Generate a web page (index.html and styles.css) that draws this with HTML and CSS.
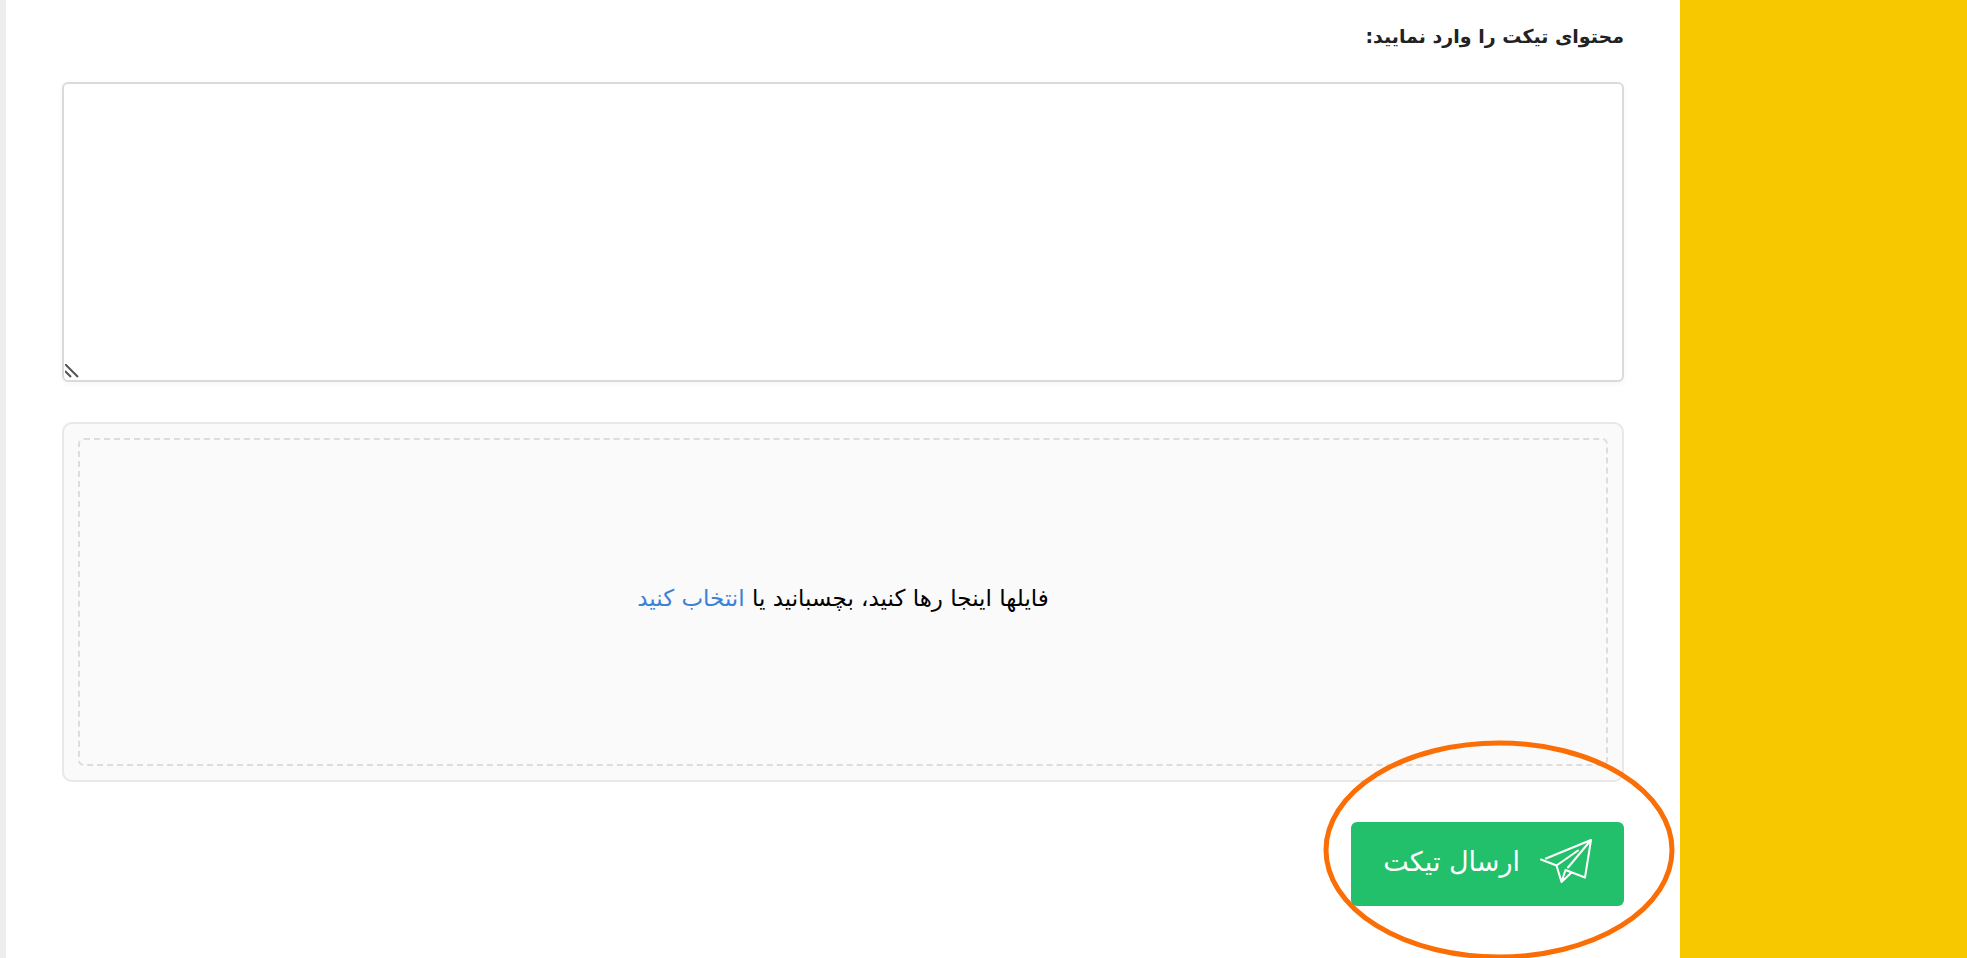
FILE: index.html
```
<!DOCTYPE html>
<html lang="fa" dir="rtl">

<head>
    <meta charset="UTF-8">
    <meta name="viewport" content="width=device-width, initial-scale=1.0">
    <title>ارسال تیکت</title>
    <link rel="stylesheet" href="styles.css">
</head>

<body>
    <aside class="sidebar"></aside>
    <main class="content">
        <form class="ticket-form">
            <label class="ticket-label" for="ticket-text">محتوای تیکت را وارد نمایید:</label>
            <div class="text-wrap">
                <textarea class="ticket-text" id="ticket-text"></textarea>
                <svg class="grip" viewBox="0 0 14 14" aria-hidden="true">
                    <path d="M0 0l13 13M0 7l6 6" />
                </svg>
            </div>
            <div class="dropzone">
                <div class="dropzone-inner">
                    <p class="dropzone-text">فایلها اینجا رها کنید، بچسبانید یا <a href="#">انتخاب کنید</a></p>
                </div>
            </div>
            <div class="submit-wrap">
                <button class="submit-btn" type="submit">
                    <svg class="plane" viewBox="0 0 52 46" aria-hidden="true">
                        <path d="M6 20.5L51 2L45 39.5L25.5 32L21.5 44L16.5 27.5L1 21.5M16.5 27.5L38 12.5M51 2L28 29.5M21.5 44L31 35" />
                    </svg>
                    <span>ارسال تیکت</span>
                </button>
                <svg class="highlight" viewBox="0 0 352 220" aria-hidden="true">
                    <ellipse cx="176" cy="110" rx="173" ry="107" />
                </svg>
            </div>
        </form>
    </main>
</body>

</html>
```

FILE: styles.css
```
* {
    box-sizing: border-box;
}

body {
    display: flex;
    min-height: 100vh;
    margin: 0;
    background-color: #fff;
    font-family: "DejaVu Sans", sans-serif;
    overflow: hidden;
}

.sidebar {
    flex: 0 0 287px;
    background-color: #f7c700;
}

.content {
    flex: 1;
    padding: 16px 56px 0;
    border-left: 6px solid #ededed;
}

.ticket-form {
    display: flex;
    flex-direction: column;
}

.ticket-label {
    margin-bottom: 26px;
    color: #222;
    font-size: 19px;
    font-weight: bold;
    line-height: 40px;
}

.text-wrap {
    display: flex;
    position: relative;
    margin-bottom: 40px;
}

.ticket-text {
    flex: 1;
    height: 300px;
    padding: 16px;
    border: 2px solid #dadada;
    border-radius: 6px;
    outline: none;
    box-shadow: 0 2px 6px rgba(0, 0, 0, 0.04);
    font: inherit;
    font-size: 23px;
    resize: vertical;
}

.ticket-text::-webkit-resizer {
    display: none;
}

.grip {
    position: absolute;
    left: 3px;
    bottom: 4px;
    width: 14px;
    height: 14px;
    fill: none;
    stroke: #555;
    stroke-width: 2;
    pointer-events: none;
}

.dropzone {
    display: flex;
    min-height: 360px;
    margin-bottom: 40px;
    padding: 14px;
    border: 2px solid #e8e8e8;
    border-radius: 10px;
    background-color: #fafafa;
}

.dropzone-inner {
    display: flex;
    flex: 1;
    justify-content: center;
    align-items: center;
    border: 2px dashed #ddd;
    border-radius: 6px;
}

.dropzone-text {
    margin: 0;
    padding-bottom: 8px;
    color: #000;
    font-size: 23px;
    line-height: 40px;
}

.dropzone-text a {
    color: #3b82d6;
    text-decoration: none;
}

.submit-wrap {
    position: relative;
    align-self: flex-start;
}

.submit-btn {
    display: flex;
    align-items: center;
    gap: 20px;
    height: 84px;
    padding: 0 32px 6px;
    border: none;
    border-radius: 6px;
    background-color: #22c06b;
    color: #fff;
    font: inherit;
    font-size: 27px;
    cursor: pointer;
}

.plane {
    width: 52px;
    height: 46px;
    fill: none;
    stroke: #fff;
    stroke-width: 2;
    stroke-linecap: round;
    stroke-linejoin: round;
}

/* ring around the send button */
.highlight {
    position: absolute;
    top: -82px;
    right: -51px;
    width: 352px;
    height: 220px;
    fill: none;
    stroke: #fa6e05;
    stroke-width: 5;
    pointer-events: none;
}
```
